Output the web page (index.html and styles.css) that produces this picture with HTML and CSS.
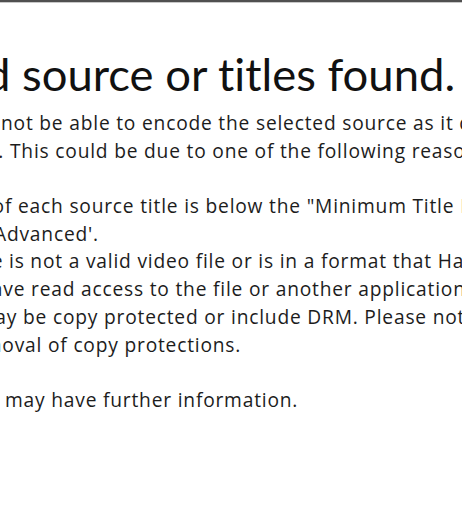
FILE: index.html
```html
<!DOCTYPE html>
<html lang="en">
<head>
<meta charset="utf-8">
<title>No valid source or titles found.</title>
<link rel="stylesheet" href="styles.css">
</head>
<body>
<div class="dialog">
  <h1 class="title"><span class="cut">No valid </span><span>source or titles found.</span></h1>
  <div class="message">
    <p class="line at-1"><span class="cut">HandBrake may </span><span>not be able to encode the selected source as it did not find any valid</span></p>
    <p class="line at-10"><span class="cut">titles. </span><span>This could be due to one of the following reasons:</span></p>
    <p class="line gap"></p>
    <p class="line at-18"><span class="cut">- The duration of </span><span>each source title is below the "Minimum Title Duration" setting in 'Tools &gt;</span></p>
    <p class="line at-n6"><span class="cut">Preferences &gt; </span><span>Advanced'.</span></p>
    <p class="line at-9"><span class="cut">- The source file </span><span>is not a valid video file or is in a format that HandBrake does not support.</span></p>
    <p class="line at-31"><span class="cut">- You do not have </span><span>read access to the file or another application has the file locked.</span></p>
    <p class="line at-23"><span class="cut">- The source may </span><span>be copy protected or include DRM. Please note that HandBrake does not</span></p>
    <p class="line at-48"><span class="cut">support the removal </span><span>of copy protections.</span></p>
    <p class="line gap"></p>
    <p class="line at-5"><span class="cut">The Activity Log </span><span>may have further information.</span></p>
  </div>
</div>
</body>
</html>
```

FILE: styles.css
```css
html, body {
  margin: 0;
  padding: 0;
  background: #ffffff;
}

body {
  width: 462px;
  height: 512px;
  overflow: hidden;
  color: #1c1c1c;
  font-variant-ligatures: none;
}

/* window edge along the top */
.dialog {
  border-top: 2px solid #505050;
  box-shadow: inset 0 1px 0 #c8c8c8;
  height: 510px;
  box-sizing: border-box;
  padding-top: 42px;
}

.title,
.line {
  display: flex;
  white-space: nowrap;
  margin: 0;
}

.title {
  font-family: Lato, "Open Sans", sans-serif;
  font-size: 45.4px;
  font-weight: 400;
  line-height: 60px;
  color: #111111;
  padding-left: 22px;
  margin-bottom: 5px;
}

.message {
  font-family: "Open Sans", "Noto Sans", sans-serif;
  font-size: 19.2px;
  letter-spacing: 0.8px;
  line-height: 27.7px;
}

.line {
  height: 27.7px;
}

/* words that run past the left edge of the view */
.cut {
  flex: 0 0 0;
  width: 0;
  display: flex;
  justify-content: flex-end;
  white-space: pre;
}

.at-1 { margin-left: 1px; }
.at-5 { margin-left: 5px; }
.at-9 { margin-left: 9px; }
.at-10 { margin-left: 10px; }
.at-18 { margin-left: 18px; }
.at-23 { margin-left: 23px; }
.at-31 { margin-left: 31px; }
.at-48 { margin-left: 48px; }
.at-n6 { margin-left: -6px; }
```
